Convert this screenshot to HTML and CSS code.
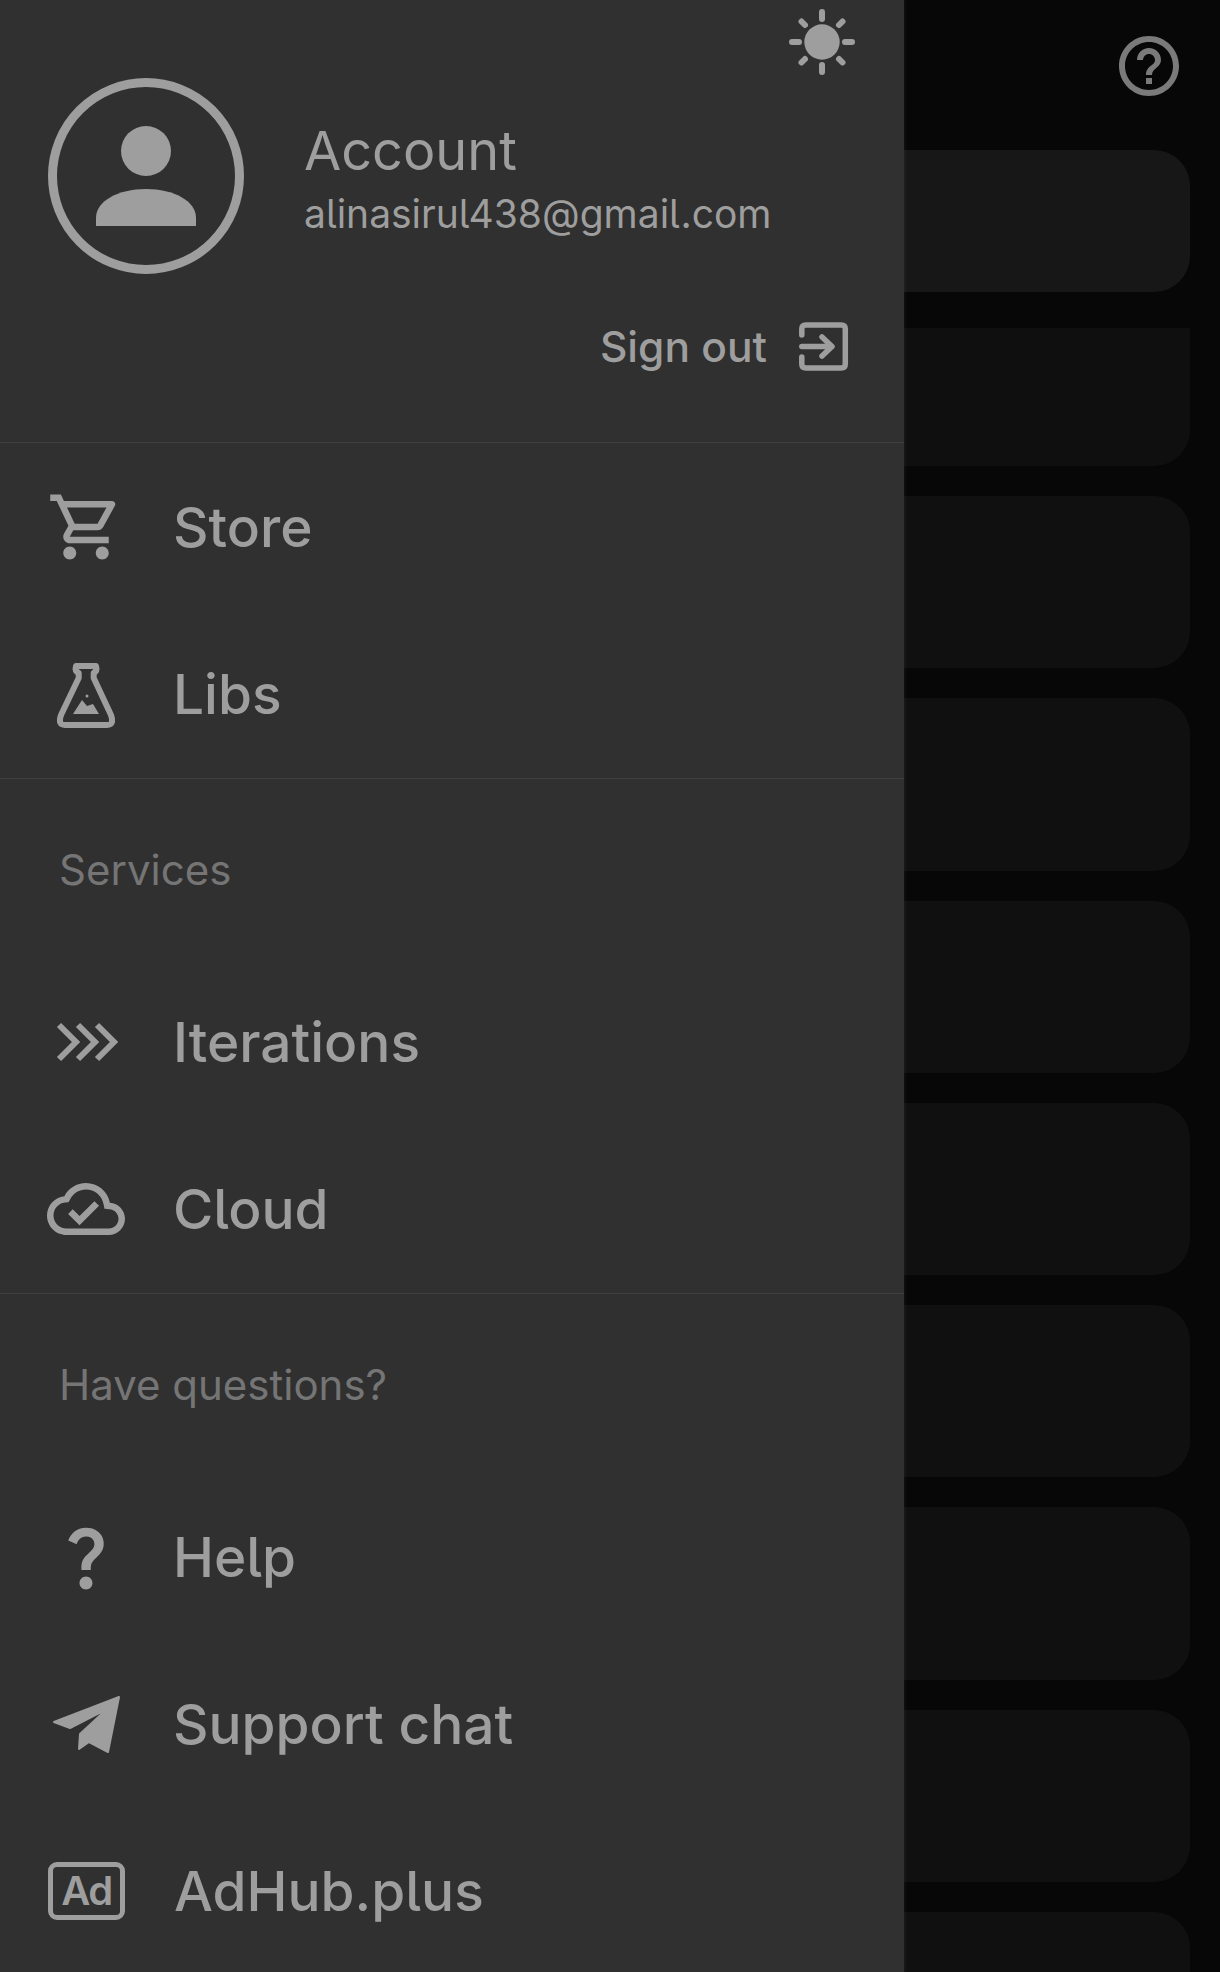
FILE: index.html
```html
<!DOCTYPE html>
<html lang="en">
<head>
    <meta charset="UTF-8">
    <meta name="viewport" content="width=device-width, initial-scale=1.0">
    <title>Menu</title>
    <link rel="stylesheet" href="styles.css">
</head>
<body>
    <div class="page">
        <div class="topbar">
            <svg class="help-icon" viewBox="0 0 24 24"><path d="M11 18h2v-2h-2v2zm1-16C6.48 2 2 6.48 2 12s4.48 10 10 10 10-4.48 10-10S17.52 2 12 2zm0 18c-4.41 0-8-3.59-8-8s3.59-8 8-8 8 3.59 8 8-3.59 8-8 8zm0-14c-2.21 0-4 1.79-4 4h2c0-1.1.9-2 2-2s2 .9 2 2c0 2-3 1.75-3 5h2c0-2.25 3-2.5 3-5 0-2.21-1.79-4-4-4z"/></svg>
        </div>
        <div class="cards">
            <div class="card card-first"></div>
            <div class="card card-second"></div>
            <div class="card"></div>
            <div class="card"></div>
            <div class="card"></div>
            <div class="card"></div>
            <div class="card"></div>
            <div class="card"></div>
            <div class="card"></div>
            <div class="card"></div>
        </div>
    </div>

    <div class="drawer">
        <div class="account">
            <div class="theme-row">
                <svg class="sun" viewBox="0 0 66 66">
                    <circle cx="33" cy="33" r="17.7"/>
                    <g class="rays">
                        <path d="M33 3v7M33 56v7M3 33h7M56 33h7M12.500 12.500l3.500 3.500M50 50l3.500 3.500M53.500 12.500L50 16M16 50l-3.500 3.500"/>
                    </g>
                </svg>
            </div>
            <div class="profile">
                <svg class="avatar" viewBox="0 0 196 196">
                    <circle class="avatar-ring" cx="98" cy="98" r="93.500"/>
                    <circle cx="98" cy="73" r="25"/>
                    <path d="M48 148v-8c0-17 22-29 50-29s50 12 50 29v8z"/>
                </svg>
                <div class="profile-text">
                    <div class="profile-name">Account</div>
                    <div class="profile-mail">alinasirul438@gmail.com</div>
                </div>
            </div>
            <div class="signout">
                <span>Sign out</span>
                <svg class="signout-icon" viewBox="0 0 50 50">
                    <path d="M2.800 13V7q0-4 4-4h35.500q4 0 4 4v35q0 4-4 4H6.800q-4 0-4-4v-7"/>
                    <path d="M2.800 24.500H32M23 15l10 9.500-10 9.500"/>
                </svg>
            </div>
        </div>

        <div class="group">
            <div class="row">
                <svg class="icon" viewBox="0 0 24 24"><path d="M15.55 13c.75 0 1.41-.41 1.75-1.03l3.58-6.49A.996.996 0 0 0 20.01 4H5.21l-.94-2H1v2h2l3.6 7.59-1.35 2.44C4.52 15.37 5.48 17 7 17h12v-2H7l1.100-2h7.450zM6.160 6h12.150l-2.760 5H8.530L6.160 6zM7 18c-1.100 0-1.990.9-1.990 2S5.900 22 7 22s2-.9 2-2-.9-2-2-2zm10 0c-1.100 0-1.990.9-1.990 2s.89 2 1.990 2 2-.9 2-2-.9-2-2-2z"/></svg>
                <span>Store</span>
            </div>
            <div class="row">
                <svg class="icon" viewBox="0 0 78 78">
                    <path class="line" d="M31.700 23V18Q27.500 16 29 11H49Q50.500 16 46.700 18V23L64 60q3.500 10-4 10H18q-7.500 0-4-10z"/>
                    <path d="M26 59l9-14 5 6 6-2 6 10z"/>
                    <circle cx="40" cy="41" r="1.500"/>
                </svg>
                <span>Libs</span>
            </div>
        </div>

        <div class="group">
            <div class="group-title">Services</div>
            <div class="row">
                <svg class="icon" viewBox="0 0 78 78">
                    <path class="line miter" d="M12 22l17 17-17 17M31 22l17 17-17 17M50 22l17 17-17 17"/>
                </svg>
                <span>Iterations</span>
            </div>
            <div class="row">
                <svg class="icon" viewBox="0 0 24 24"><path d="M19.350 10.040C18.670 6.590 15.640 4 12 4 9.110 4 6.600 5.640 5.350 8.040 2.340 8.360 0 10.910 0 14c0 3.310 2.690 6 6 6h13c2.760 0 5-2.240 5-5 0-2.640-2.050-4.780-4.650-4.960zM19 18H6c-2.210 0-4-1.790-4-4 0-2.050 1.530-3.760 3.560-3.970l1.070-.11.5-.95C8.080 7.140 9.940 6 12 6c2.620 0 4.880 1.860 5.390 4.430l.3 1.500 1.530.11c1.560.1 2.780 1.410 2.780 2.960 0 1.650-1.350 3-3 3zm-9-3.820l-2.090-2.090L6.500 13.500 10 17l6.010-6.010-1.410-1.410z"/></svg>
                <span>Cloud</span>
            </div>
        </div>

        <div class="group">
            <div class="group-title">Have questions?</div>
            <div class="row">
                <svg class="icon" viewBox="0 0 24 24"><path d="M11.070 12.850c.77-1.390 2.250-2.210 3.110-3.440.91-1.290.4-3.700-2.180-3.700-1.690 0-2.520 1.280-2.870 2.340L6.540 6.960C7.250 4.830 9.180 3 11.990 3c2.350 0 3.960 1.070 4.780 2.410.7 1.150 1.110 3.300.03 4.900-1.200 1.770-2.350 2.310-2.970 3.450-.25.46-.35.76-.35 2.240h-2.890c-.01-.78-.13-2.050.48-3.150zM14 20c0 1.100-.9 2-2 2s-2-.9-2-2 .9-2 2-2 2 .9 2 2z"/></svg>
                <span>Help</span>
            </div>
            <div class="row">
                <svg class="icon" viewBox="0 0 78 78">
                    <path class="soft" d="M7 37L72 12 61 67 42 57 32 64 33 49 60 24 23 43z"/>
                </svg>
                <span>Support chat</span>
            </div>
            <div class="row">
                <div class="ad-badge">Ad</div>
                <span>AdHub.plus</span>
            </div>
        </div>
    </div>
</body>
</html>
```

FILE: styles.css
```css
* {
    box-sizing: border-box;
}
html, body {
    margin: 0;
    height: 100%;
}
body {
    font-family: Inter, "Noto Sans", sans-serif;
    font-feature-settings: "cv05";
    background: #070707;
    color: #9e9e9e;
    overflow: hidden;
}
.page {
    padding: 0 30px 0 0;
}
.topbar {
    height: 150px;
    display: flex;
    justify-content: flex-end;
    padding: 30px 5px 0 0;
}
.help-icon {
    width: 72px;
    height: 72px;
    fill: #7a7a7a;
}
.cards {
    display: flex;
    flex-direction: column;
    gap: 30px;
}
.card {
    height: 172.300px;
    background: #101010;
    border-radius: 36px;
}
.card-first {
    height: 142px;
    background: #171717;
    margin-bottom: 6px;
}
.card-second {
    height: 138px;
    background: #0f0f0f;
    border-radius: 0 0 36px 0;
}

.drawer {
    position: absolute;
    top: 0;
    left: 0;
    width: 904px;
    height: 100%;
    background: #303030;
    box-shadow: 2px 0 2px rgba(255, 255, 255, 0.04);
}
.account {
    height: 443px;
    border-bottom: 1px solid #404040;
    padding: 9px 54px 0 48px;
}
.theme-row {
    display: flex;
    justify-content: flex-end;
    margin-right: -5px;
    height: 69px;
}
.sun {
    width: 66px;
    height: 66px;
    fill: #9e9e9e;
}
.rays path {
    fill: none;
    stroke: #9e9e9e;
    stroke-width: 6;
    stroke-linecap: round;
}
.profile {
    display: flex;
    align-items: center;
    gap: 60px;
}
.avatar {
    width: 196px;
    height: 196px;
    fill: #9e9e9e;
}
.avatar-ring {
    fill: none;
    stroke: #9e9e9e;
    stroke-width: 9;
}
.profile-text {
    padding-top: 9px;
}
.profile-name {
    font-size: 54px;
    line-height: 70px;
    margin-top: -4px;
}
.profile-mail {
    font-size: 39px;
    line-height: 56px;
}
.signout {
    display: flex;
    justify-content: flex-end;
    align-items: center;
    gap: 32px;
    margin: 47px 1px 0 0;
    font-size: 42.500px;
    font-weight: 500;
}
.signout-icon {
    width: 50px;
    height: 50px;
    fill: none;
    stroke: #9e9e9e;
    stroke-width: 5.500;
    stroke-linecap: round;
    stroke-linejoin: round;
}

.group {
    padding-bottom: 1px;
    border-bottom: 1px solid #404040;
}
.group:last-child {
    padding-bottom: 0;
    border-bottom: none;
}
.group-title {
    height: 180px;
    display: flex;
    align-items: center;
    padding-left: 59px;
    font-size: 42px;
    color: #757575;
}
.row {
    height: 167px;
    display: flex;
    align-items: center;
    padding-left: 47px;
    font-size: 55px;
    font-weight: 500;
}
.group-title + .row {
    height: 166px;
}
.icon {
    width: 78px;
    height: 78px;
    fill: #9e9e9e;
    margin-right: 48px;
    flex-shrink: 0;
}
.line {
    fill: none;
    stroke: #9e9e9e;
    stroke-width: 6;
    stroke-linecap: round;
    stroke-linejoin: round;
}
.line.miter {
    stroke-linecap: butt;
    stroke-linejoin: miter;
}
.soft {
    stroke: #9e9e9e;
    stroke-width: 2;
    stroke-linejoin: round;
}
.ad-badge {
    width: 77px;
    height: 58px;
    margin: 0 49px 0 1px;
    border: 5px solid #9e9e9e;
    border-radius: 9px;
    display: flex;
    align-items: center;
    justify-content: center;
    font-size: 40px;
    font-weight: 600;
    letter-spacing: -1.500px;
    flex-shrink: 0;
}
```
